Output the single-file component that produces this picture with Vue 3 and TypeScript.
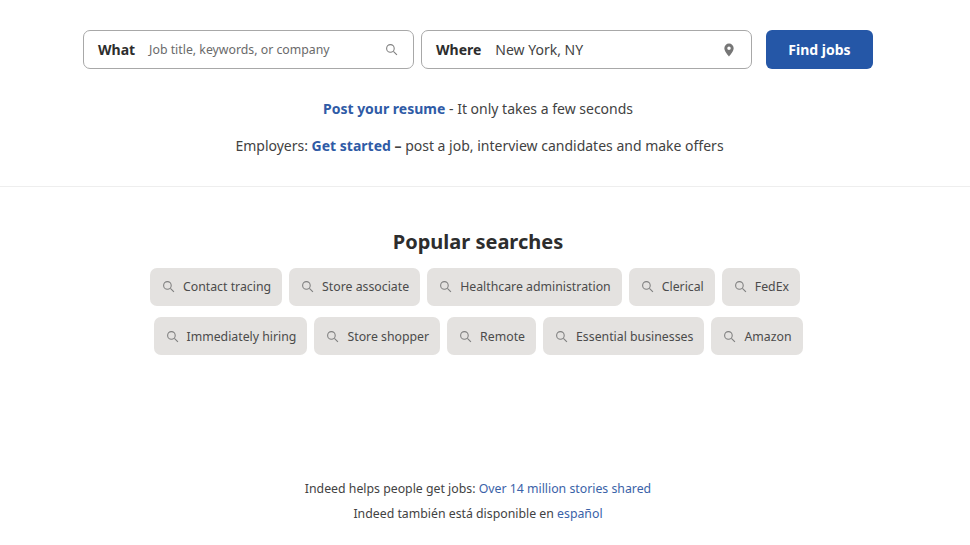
<template>
  <div class="page">
    <div class="content">
      <form class="search" @submit.prevent>
        <div class="field">
          <label class="label">What</label>
          <span class="placeholder">Job title, keywords, or company</span>
          <svg class="icon" width="13" height="13" viewBox="0 0 24 24">
            <circle cx="10" cy="10" r="7" />
            <path d="M15.500 15.500 22 22" />
          </svg>
        </div>
        <div class="field">
          <label class="label">Where</label>
          <span class="value">New York, NY</span>
          <svg class="pin" width="14" height="14" viewBox="0 0 24 24">
            <path fill-rule="evenodd" d="M12 1a8 8 0 0 0-8 8c0 5.500 8 14 8 14s8-8.500 8-14a8 8 0 0 0-8-8zm0 11a3 3 0 1 1 0-6 3 3 0 0 1 0 6z" />
          </svg>
        </div>
        <button class="find">Find jobs</button>
      </form>

      <p class="line first"><a class="strong-link">Post your resume</a><span> - </span>It only takes a few seconds</p>
      <p class="line second">Employers: <a class="strong-link">Get started</a> <b class="dash-bold">–</b> post a job, interview candidates and make offers</p>
    </div>

    <div class="divider"></div>

    <div class="content">
      <h2 class="title">Popular searches</h2>
      <div v-for="(row, i) in rows" :key="i" class="chips">
        <a v-for="chip in row" :key="chip" class="chip">
          <svg class="chip-icon" width="13" height="13" viewBox="0 0 24 24">
            <circle cx="10" cy="10" r="7" />
            <path d="M15.500 15.500 22 22" />
          </svg>
          {{ chip }}
        </a>
      </div>

      <footer class="foot">
        <p>Indeed helps people get jobs: <a>Over 14 million stories shared</a></p>
        <p>Indeed también está disponible en <a>español</a></p>
      </footer>
    </div>
  </div>
</template>

<script setup lang="ts">
const rows: string[][] = [
  ['Contact tracing', 'Store associate', 'Healthcare administration', 'Clerical', 'FedEx'],
  ['Immediately hiring', 'Store shopper', 'Remote', 'Essential businesses', 'Amazon'],
];
</script>

<style>
html, body {
  background: #fff;
  overflow: hidden;
}
</style>

<style scoped>
.page {
  height: 545px;
  font-family: "Noto Sans", sans-serif;
  color: #424242;
  overflow: hidden;
}
.content {
  width: 956px;
}
.search {
  display: flex;
  justify-content: center;
  gap: 7px;
  padding-top: 30px;
}
.field {
  box-sizing: border-box;
  width: 331px;
  height: 39px;
  border: 1px solid #a8a8a8;
  border-radius: 7px;
  display: flex;
  align-items: center;
  padding: 0 15px 0 14px;
}
.label {
  font-size: 14px;
  font-weight: 700;
  color: #2d2d2d;
  margin-right: 14px;
}
.placeholder {
  font-size: 12.3px;
  color: #6a6a6a;
  flex: 1;
}
.value {
  font-size: 14px;
  color: #424242;
  flex: 1;
}
.icon, .chip-icon {
  fill: none;
  stroke: #808080;
  stroke-width: 2;
  flex: none;
}
.pin {
  fill: #767676;
  flex: none;
}
.find {
  box-sizing: border-box;
  width: 107px;
  height: 39px;
  margin-left: 7px;
  border: none;
  border-radius: 6px;
  background: #2557a7;
  color: #fff;
  font: 700 14px "Noto Sans", sans-serif;
}
.line {
  margin: 0;
  text-align: center;
  font-size: 14px;
  line-height: 20px;
}
.first { margin-top: 30px; }
.second {
  margin-top: 17px;
  padding-left: 3px;
}
.strong-link {
  color: #2f5ba6;
  font-weight: 700;
}
.dash-bold { font-weight: 700; }
.divider {
  height: 1px;
  background: #eeeeee;
  margin-top: 30px;
}
.title {
  margin: 40px 0 10.5px;
  text-align: center;
  font-size: 20px;
  line-height: 30px;
  font-weight: 700;
  color: #2d2d2d;
}
.chips {
  display: flex;
  justify-content: center;
  gap: 7px;
  margin-bottom: 11.5px;
}
.chips:first-of-type {
  padding-right: 6px;
}
.chip {
  display: flex;
  align-items: center;
  gap: 8px;
  height: 38px;
  padding: 0 11px 0 12px;
  border-radius: 7px;
  background: #e4e2e0;
  font-size: 12.3px;
  color: #4b4b4b;
}
.foot {
  margin-top: 122.500px;
  text-align: center;
  font-size: 12.3px;
  line-height: 22px;
}
.foot p { margin: 0 0 3px; }
.foot a { color: #3a62a8; }
</style>
